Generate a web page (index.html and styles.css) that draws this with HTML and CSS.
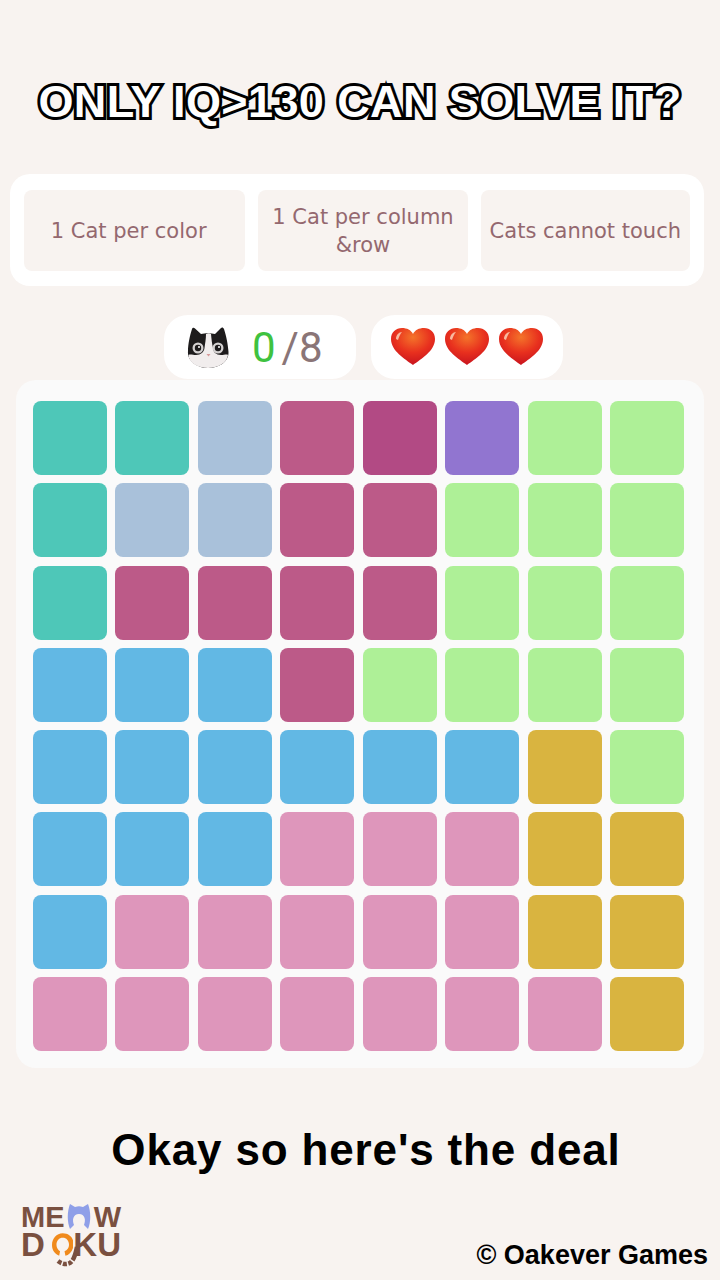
FILE: index.html
```html
<!DOCTYPE html>
<html lang="en">
<head>
  <meta charset="UTF-8">
  <title>Meowdoku</title>
  <link rel="stylesheet" href="styles.css">
</head>
<body>

  <h1 class="titulo">ONLY IQ&gt;130 CAN SOLVE IT?</h1>

  <div class="regras">
    <div class="regra regra-cor">1 Cat per color</div>
    <div class="regra">1 Cat per column &amp;row</div>
    <div class="regra">Cats cannot touch</div>
  </div>

  <div class="status">
    <div class="pill pill-gatos">
      <svg class="gato" viewBox="0 0 42 41">
        <path d="M1 24 C1 17 3 8 5 2 C5.500 0.500 7 0.500 8 1.500 L14 7 C18 6 24 6 28 7 L34 1 C35 0 36.500 0.500 37 2 C39 8 41 17 41.500 25 C42 34 33 41 21 41 C9 41 0 33 1 24 Z" fill="#1d1b1c"/>
        <path d="M19 7 C21 6 23 6 24 7 C24.500 12 25 17 26 21 C26 25 29 28 34 28 C37 28 40 27 41 28 C40 36 31 41 21 41 C11 41 2 36 1.500 28 C3 27 6 28 9 28 C14 28 17 25 17.500 21 C18 17 19 12 19 7 Z" fill="#f1eded"/>
        <circle cx="11" cy="21" r="5.500" fill="#d4d1d1"/>
        <circle cx="11" cy="21" r="3.200" fill="#1d1b1c"/>
        <circle cx="12" cy="20" r="1" fill="#ffffff"/>
        <circle cx="31" cy="21" r="5.500" fill="#d4d1d1"/>
        <circle cx="31" cy="21" r="3.200" fill="#1d1b1c"/>
        <circle cx="32" cy="20" r="1" fill="#ffffff"/>
        <path d="M19.500 27 L23.500 27 L21.500 29.500 Z" fill="#d79a9a"/>
      </svg>
      <span class="conta"><span class="conta-zero">0</span><span class="conta-total">/8</span></span>
    </div>
    <div class="pill pill-vidas">
      <svg class="coracao" viewBox="0 0 44 38"><use href="#heart"/></svg>
      <svg class="coracao" viewBox="0 0 44 38"><use href="#heart"/></svg>
      <svg class="coracao" viewBox="0 0 44 38"><use href="#heart"/></svg>
    </div>
  </div>

  <svg class="defs" width="0" height="0">
    <defs>
      <radialGradient id="brilho" cx="50%" cy="25%" r="75%">
        <stop offset="0" stop-color="#f4742a"/>
        <stop offset="0.55" stop-color="#e8301e"/>
        <stop offset="1" stop-color="#c8141e"/>
      </radialGradient>
      <g id="heart">
        <path d="M22 37 C14 31 0 23 0 11 C0 4 5 0 11 0 C16 0 20 2 22 6 C24 2 28 0 33 0 C39 0 44 4 44 11 C44 23 30 31 22 37 Z" fill="url(#brilho)"/>
        <path d="M5 11 C5 7 8 4 11 4 C9 6 8 9 7 12 Z" fill="#f9b9a0"/>
      </g>
    </defs>
  </svg>

  <div class="tabuleiro">
    <div class="casa teal"></div><div class="casa teal"></div><div class="casa cinza"></div><div class="casa vinho"></div><div class="casa vinho-esc"></div><div class="casa roxo"></div><div class="casa verde"></div><div class="casa verde"></div>
    <div class="casa teal"></div><div class="casa cinza"></div><div class="casa cinza"></div><div class="casa vinho"></div><div class="casa vinho"></div><div class="casa verde"></div><div class="casa verde"></div><div class="casa verde"></div>
    <div class="casa teal"></div><div class="casa vinho"></div><div class="casa vinho"></div><div class="casa vinho"></div><div class="casa vinho"></div><div class="casa verde"></div><div class="casa verde"></div><div class="casa verde"></div>
    <div class="casa azul"></div><div class="casa azul"></div><div class="casa azul"></div><div class="casa vinho"></div><div class="casa verde"></div><div class="casa verde"></div><div class="casa verde"></div><div class="casa verde"></div>
    <div class="casa azul"></div><div class="casa azul"></div><div class="casa azul"></div><div class="casa azul"></div><div class="casa azul"></div><div class="casa azul"></div><div class="casa ouro"></div><div class="casa verde"></div>
    <div class="casa azul"></div><div class="casa azul"></div><div class="casa azul"></div><div class="casa rosa"></div><div class="casa rosa"></div><div class="casa rosa"></div><div class="casa ouro"></div><div class="casa ouro"></div>
    <div class="casa azul"></div><div class="casa rosa"></div><div class="casa rosa"></div><div class="casa rosa"></div><div class="casa rosa"></div><div class="casa rosa"></div><div class="casa ouro"></div><div class="casa ouro"></div>
    <div class="casa rosa"></div><div class="casa rosa"></div><div class="casa rosa"></div><div class="casa rosa"></div><div class="casa rosa"></div><div class="casa rosa"></div><div class="casa rosa"></div><div class="casa ouro"></div>
  </div>

  <p class="legenda">Okay so here's the deal</p>

  <div class="rodape">
    <div class="logo">
      <div class="logo-linha logo-meow">ME<svg class="logo-o" viewBox="0 0 24 26"><path d="M3 25 C0 18 0 8 3 0 L8 3 C11 2 13 2 16 3 L21 0 C24 8 24 18 21 25 L17 21 C19 16 18 10 12 10 C6 10 5 16 7 21 Z" fill="#8f9fe8"/></svg>W</div>
      <div class="logo-linha logo-doku">D<svg class="logo-o logo-o-laranja" viewBox="0 0 24 26"><path d="M12 0 C20 0 25 6 24 14 C23 20 19 24 15 25 L14 20 C17 19 19 16 19 13 C19 8 16 5 12 5 C8 5 5 8 5 13 C5 16 7 19 9 20 L8 25 C4 23 0 20 0 13 C0 6 5 0 12 0 Z" fill="#f08a1c"/></svg>KU</div>
      <svg class="logo-rabo" viewBox="0 0 24 22"><path d="M2 15 C7 19 13 19 16 15 C19 11 20 6 21 1" fill="none" stroke="#7a5040" stroke-width="4.500" stroke-dasharray="4 1.500 4 1.500 4 1.500 40"/></svg>
    </div>
    <div class="copyright">© Oakever Games</div>
  </div>

</body>
</html>
```

FILE: styles.css
```css
/* Estilos gerais */
body {
  margin: 0;
  width: 720px;
  height: 1280px;
  overflow: hidden;
  background-color: #f8f3f0;
  font-family: "Liberation Sans", Arial, sans-serif;
}

.titulo {
  margin: 0;
  padding-top: 77px;
  height: 98px;
  box-sizing: border-box;
  text-align: center;
  font-size: 45px;
  line-height: 50px;
  font-weight: bold;
  letter-spacing: 0.4px;
  white-space: nowrap;
  color: #ffffff;
  -webkit-text-stroke: 6px #000000;
  paint-order: stroke fill;
}

.regras {
  display: flex;
  gap: 13px;
  margin: 76px 16px 0 10px;
  padding: 16px 14px 15px;
  height: 112px;
  box-sizing: border-box;
  background-color: #ffffff;
  border-radius: 20px;
}

.regra {
  flex: 1;
  display: flex;
  align-items: center;
  justify-content: center;
  text-align: center;
  padding: 0 4px;
  background-color: #f8f3f0;
  border-radius: 8px;
  font-family: "DejaVu Sans", sans-serif;
  font-size: 21px;
  line-height: 28px;
  color: #94686f;
}

.regra-cor {
  padding-right: 16px;
}

.status {
  display: flex;
  gap: 15px;
  margin: 29px 0 0 164px;
}

.pill {
  display: flex;
  align-items: center;
  width: 192px;
  height: 64px;
  box-sizing: border-box;
  background-color: #ffffff;
  border-radius: 24px;
}

.pill-gatos {
  padding-left: 23px;
  gap: 23px;
}

.pill-vidas {
  padding-left: 20px;
  gap: 10px;
}

.gato {
  width: 42px;
  height: 41px;
}

.conta {
  font-family: Roboto, sans-serif;
  font-size: 42px;
  color: #8a7577;
}

.conta-zero {
  color: #3fc23f;
}

.conta-total {
  margin-left: 6px;
}

.coracao {
  width: 44px;
  height: 38px;
}

.defs {
  position: absolute;
}

.tabuleiro {
  display: grid;
  grid-template-columns: repeat(8, 1fr);
  grid-template-rows: repeat(8, 1fr);
  gap: 8.1px 8.4px;
  width: 688px;
  height: 688px;
  box-sizing: border-box;
  margin: 1px 0 0 16px;
  padding: 21px 20px 17px 17px;
  background-color: #fafafa;
  border-radius: 20px;
}

.casa {
  border-radius: 8px;
}

.teal { background-color: #4ec7b8; }
.cinza { background-color: #a9c1da; }
.vinho { background-color: #bc5a88; }
.vinho-esc { background-color: #b24a84; }
.roxo { background-color: #9175d0; }
.verde { background-color: #aef097; }
.azul { background-color: #62b8e4; }
.ouro { background-color: #d9b440; }
.rosa { background-color: #de96bb; }

.legenda {
  margin: 54px 0 0 12px;
  text-align: center;
  font-size: 44px;
  line-height: 56px;
  font-weight: bold;
  letter-spacing: 0.85px;
  color: #000000;
}

.rodape {
  display: flex;
  justify-content: space-between;
  align-items: flex-end;
  margin-top: 26px;
  padding: 0 12px 0 21px;
}

.logo {
  position: relative;
  width: 100px;
  height: 64px;
}

.logo-linha {
  display: flex;
  align-items: center;
  font-weight: bold;
  color: #7a5040;
}

.logo-meow {
  justify-content: space-between;
  height: 26px;
  font-size: 29px;
  line-height: 26px;
}

.logo-doku {
  height: 26px;
  margin-top: 2px;
  font-size: 33px;
  line-height: 26px;
}

.logo-o {
  width: 24px;
  height: 26px;
}

.logo-o-laranja {
  margin: 0 0 0 7px;
}

.logo-rabo {
  position: absolute;
  left: 35px;
  top: 42px;
  width: 24px;
  height: 22px;
}

.copyright {
  margin-bottom: -2px;
  font-size: 27px;
  line-height: 30px;
  font-weight: bold;
  color: #000000;
}
```
